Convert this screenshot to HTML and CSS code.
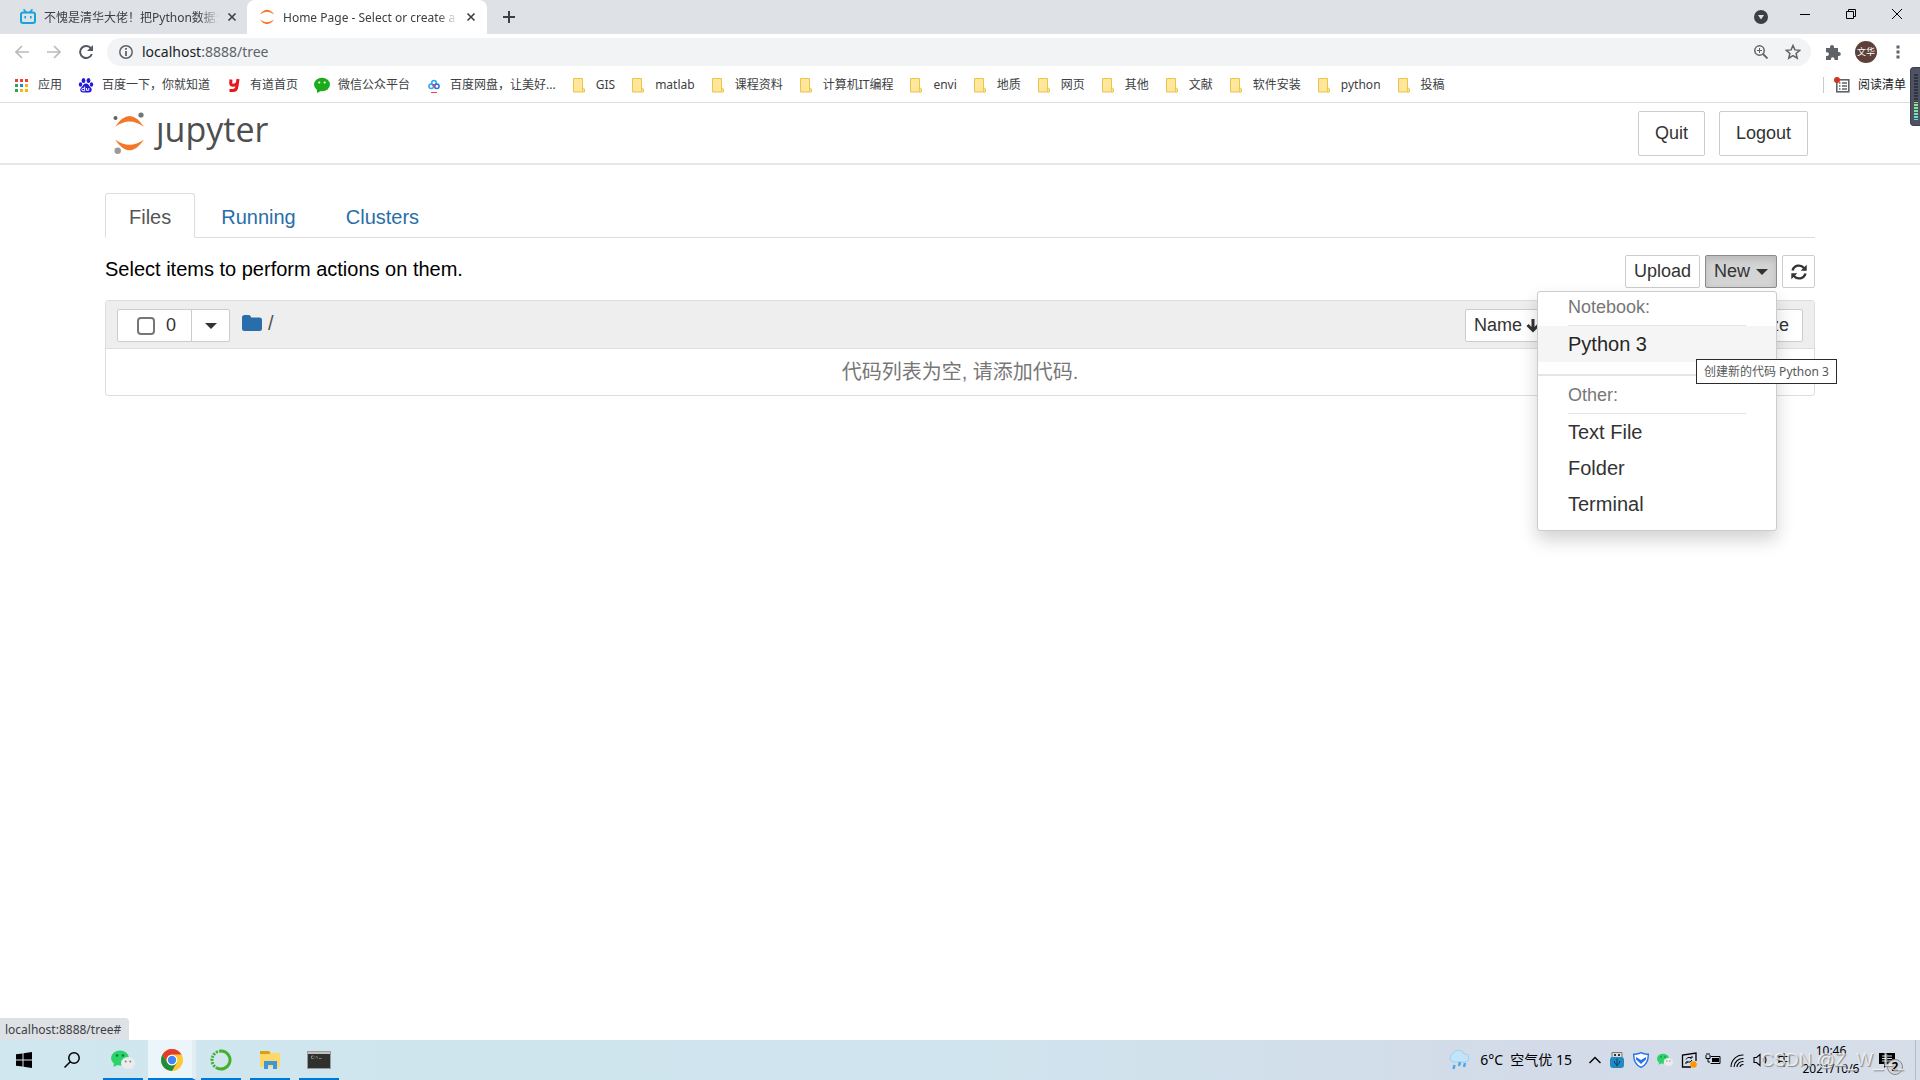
FILE: index.html
```html
<!DOCTYPE html>
<html lang="zh-CN">
<head>
<meta charset="utf-8">
<title>Home Page - Select or create a notebook</title>
<link rel="stylesheet" href="styles.css">
</head>
<body>
<svg class="defs" aria-hidden="true">
  <symbol id="i-close" viewBox="0 0 10 10"><path d="M1.5 1.5l7 7M8.5 1.5l-7 7" fill="none" stroke="#3c4043" stroke-width="1.6"/></symbol>
  <symbol id="i-folder" viewBox="0 0 16 16"><path d="M1.5 1.5h9v9l2 1.500v3h-11z" fill="#ffe69b" stroke="#e9c54b"/><path d="M10.500 10.500v4" stroke="#e9c54b"/></symbol>
  <symbol id="i-ring" viewBox="0 0 16 16"><path d="M.8 5.500Q8-3.800 15.200 5.500 8 .2 .8 5.500zM.8 10.500Q8 19.800 15.200 10.500 8 15.800 .8 10.500z" fill="#f37726"/></symbol>
  <symbol id="i-wechat" viewBox="0 0 24 20"><ellipse cx="9" cy="8" rx="9" ry="7.500" fill="#2bd36b"/><path d="M3 13l-.5 4 4-2z" fill="#2bd36b"/><circle cx="6" cy="5.500" r="1.200" fill="#14783c"/><circle cx="12" cy="5.500" r="1.200" fill="#14783c"/><ellipse cx="17" cy="13" rx="7" ry="6" fill="#ececec"/><path d="M20 17.500l2 2.300-.2-3.500z" fill="#ececec"/><circle cx="14.700" cy="11.500" r="1" fill="#888"/><circle cx="19.300" cy="11.500" r="1" fill="#888"/></symbol>
</svg>

<header class="browser">
  <div class="tabstrip">
    <div class="tab">
      <svg class="ico16" viewBox="0 0 16 16"><path d="M4 .8l2 2.500M12 .8l-2 2.500" stroke="#13a4dd" stroke-width="1.600" stroke-linecap="round"/><rect x="1" y="3.500" width="14" height="10.500" rx="2" fill="none" stroke="#13a4dd" stroke-width="2"/><path d="M5.200 7v2.500M10.800 7v2.500" stroke="#13a4dd" stroke-width="1.600"/></svg>
      <span class="tab-title">不愧是清华大佬！把Python数据分析</span>
      <button class="plain" aria-label="Close tab"><svg class="ico10"><use href="#i-close"/></svg></button>
    </div>
    <div class="tab active">
      <svg class="ico16"><use href="#i-ring"/></svg>
      <span class="tab-title">Home Page - Select or create a notebook</span>
      <button class="plain" aria-label="Close tab"><svg class="ico10"><use href="#i-close"/></svg></button>
    </div>
    <button class="plain newtab" aria-label="New tab"><svg class="ico12" viewBox="0 0 12 12"><path d="M6 0v12M0 6h12" stroke="#3c4043" stroke-width="2"/></svg></button>
    <div class="window-controls">
      <button class="plain tab-search" aria-label="Search tabs"><svg class="ico14" viewBox="0 0 14 14"><circle cx="7" cy="7" r="7" fill="#3c4043"/><path d="M4 5h6L7 9.500z" fill="#dee1e6"/></svg></button>
      <button class="plain" aria-label="Minimize"><svg class="ico10" viewBox="0 0 10 10"><path d="M0 5.500h10" stroke="#000"/></svg></button>
      <button class="plain" aria-label="Restore"><svg class="ico10" viewBox="0 0 10 10"><path d="M.5 2.500h7v7h-7zM2.500 2.500v-2h7v7h-2" fill="none" stroke="#000"/></svg></button>
      <button class="plain" aria-label="Close"><svg class="ico10" viewBox="0 0 10 10"><path d="M0 0l10 10M10 0L0 10" stroke="#000"/></svg></button>
    </div>
  </div>

  <div class="toolbar">
    <div class="history">
      <button class="plain" aria-label="Back"><svg class="ico14" viewBox="0 0 14 14"><path d="M14 7H1M7 1L1 7l6 6" fill="none" stroke="#b9bbbe" stroke-width="1.700"/></svg></button>
      <button class="plain" aria-label="Forward"><svg class="ico14" viewBox="0 0 14 14"><path d="M0 7h13M7 1l6 6-6 6" fill="none" stroke="#b9bbbe" stroke-width="1.700"/></svg></button>
      <button class="plain" aria-label="Reload"><svg class="ico14" viewBox="0 0 14 14"><path d="M12 3.500A6 6 0 1 0 12.800 9" fill="none" stroke="#55595d" stroke-width="2"/><path d="M14 0v6H8z" fill="#55595d"/></svg></button>
    </div>
    <div class="omnibox">
      <svg class="ico14" viewBox="0 0 14 14"><circle cx="7" cy="7" r="6.200" fill="none" stroke="#5f6368" stroke-width="1.500"/><path d="M7 3v1.800M7 6v5" stroke="#5f6368" stroke-width="1.800"/></svg>
      <a class="url" href="#"><b>localhost</b>:8888/tree</a>
      <svg class="ico14" viewBox="0 0 14 14"><circle cx="5.500" cy="5.500" r="4.700" fill="none" stroke="#5f6368" stroke-width="1.500"/><path d="M9 9l4.500 4.500" stroke="#5f6368" stroke-width="1.800"/><path d="M5.500 3v5M3 5.500h5" stroke="#5f6368"/></svg>
      <svg class="ico16" viewBox="0 0 16 16"><path d="M8 1.500l1.900 4.400 4.800.4-3.600 3.200 1.100 4.700L8 11.700l-4.200 2.500 1.100-4.700L1.300 6.300l4.800-.4z" fill="none" stroke="#5f6368" stroke-width="1.500"/></svg>
    </div>
    <button class="plain" aria-label="Extensions"><svg class="ico16" viewBox="0 0 16 16"><path d="M1 4h4V3a2 2 0 0 1 4 0v1h4v4h.8a2 2 0 0 1 0 4H13v4H9.500v-1a1.800 1.800 0 0 0-3.600 0v1H1v-4h1a1.800 1.800 0 0 0 0-3.800H1z" fill="#5f6368"/></svg></button>
    <button class="avatar">文华</button>
    <button class="plain" aria-label="Menu"><svg class="ico14" viewBox="0 0 14 14"><path d="M5.500 .5h3v3h-3zM5.500 5.500h3v3h-3zM5.500 10.500h3v3h-3z" fill="#5f6368"/></svg></button>
  </div>

  <nav class="bookmarks">
    <a href="#"><svg class="ico16" viewBox="0 0 16 16"><path d="M1 2h3v3H1zM6 2h3v3H6zM11 2h3v3h-3z" fill="#ea4335"/><path d="M1 7h3v3H1zM1 12h3v3H1z" fill="#34a05a"/><path d="M6 7h3v3H6z" fill="#1a88f0"/><path d="M11 7h3v3h-3zM6 12h3v3H6zM11 12h3v3h-3z" fill="#fbb605"/></svg>应用</a>
    <a href="#"><svg class="ico16" viewBox="0 0 16 16"><g fill="#2319dc"><ellipse cx="5.500" cy="3.500" rx="1.900" ry="2.600"/><ellipse cx="10.500" cy="3.500" rx="1.900" ry="2.600"/><ellipse cx="2.500" cy="7.500" rx="1.700" ry="2.300"/><ellipse cx="13.500" cy="7.500" rx="1.700" ry="2.300"/><path d="M8 6.500c2.500 0 3 2.500 4.700 4 2 1.800.8 5-1.700 5-1.500 0-4.500-.2-6 0-2.500.2-3.700-3.200-1.700-5C5 9 5.500 6.500 8 6.500z"/></g><path d="M6.700 9.500v4.300H5a1.200 1.200 0 0 1 0-2.500h1.500M8.500 11v2.300h2.300V11" stroke="#fff" fill="none"/></svg>百度一下，你就知道</a>
    <a href="#"><svg class="ico16" viewBox="0 0 16 16"><path d="M5 2.500l-.3 3.500q0 2.300 2.300 2.300t3.800-2M12 2l-1 7q-.6 5-5 4.500H3.500" fill="none" stroke="#e6171e" stroke-width="3"/></svg>有道首页</a>
    <a href="#"><svg class="ico16" viewBox="0 0 16 16"><ellipse cx="8" cy="7.500" rx="8" ry="6.700" fill="#1aad19"/><path d="M3 12v4l4-2z" fill="#1aad19"/><circle cx="5.300" cy="5.500" r="1.100" fill="#fff"/><circle cx="10.700" cy="5.500" r="1.100" fill="#fff"/></svg>微信公众平台</a>
    <a href="#"><svg class="ico16" viewBox="0 0 16 16"><g fill="none" stroke-width="1.500"><circle cx="8" cy="5.700" r="2.300" stroke="#2aa8f2"/><circle cx="5.200" cy="9.200" r="2.300" stroke="#2aa8f2"/><circle cx="10.800" cy="9.200" r="2.300" stroke="#2a6cf2"/><path d="M6.500 7.500l3 3" stroke="#ee3f4d"/></g><path d="M5 15.500h6" stroke="#ee3f4d"/></svg>百度网盘，让美好...</a>
    <a href="#"><svg class="ico16"><use href="#i-folder"/></svg>GIS</a>
    <a href="#"><svg class="ico16"><use href="#i-folder"/></svg>matlab</a>
    <a href="#"><svg class="ico16"><use href="#i-folder"/></svg>课程资料</a>
    <a href="#"><svg class="ico16"><use href="#i-folder"/></svg>计算机IT编程</a>
    <a href="#"><svg class="ico16"><use href="#i-folder"/></svg>envi</a>
    <a href="#"><svg class="ico16"><use href="#i-folder"/></svg>地质</a>
    <a href="#"><svg class="ico16"><use href="#i-folder"/></svg>网页</a>
    <a href="#"><svg class="ico16"><use href="#i-folder"/></svg>其他</a>
    <a href="#"><svg class="ico16"><use href="#i-folder"/></svg>文献</a>
    <a href="#"><svg class="ico16"><use href="#i-folder"/></svg>软件安装</a>
    <a href="#"><svg class="ico16"><use href="#i-folder"/></svg>python</a>
    <a href="#"><svg class="ico16"><use href="#i-folder"/></svg>投稿</a>
    <a class="reading" href="#"><svg class="ico16" viewBox="0 0 16 16"><rect x="2.800" y="2.800" width="12" height="12" fill="none" stroke="#5f6368" stroke-width="1.600"/><path d="M5 6h1.500M8 6h5M5 9h1.500M8 9h5M5 12h1.500M8 12h5" stroke="#5f6368" stroke-width="1.400"/><circle cx="3" cy="3" r="3" fill="#d93025"/></svg>阅读清单</a>
  </nav>
</header>

<div class="page">
  <div class="masthead">
    <a class="logo" href="#" aria-label="jupyter">
      <svg class="planet" viewBox="0 0 34 42"><path d="M2 15Q16.500-7 31 15 16.500 4 2 15zM2 27.500Q16.500 49 31 27.500 16.500 38 2 27.500z" fill="#f37726"/><circle cx="2.500" cy="6" r="2" fill="#616161"/><circle cx="28" cy="3" r="2.600" fill="#757575"/><circle cx="4.700" cy="38.700" r="3.200" fill="#9a9a9a"/></svg>
      <span>ȷupyter</span>
    </a>
    <div class="session">
      <button class="btn big">Quit</button>
      <button class="btn big">Logout</button>
    </div>
  </div>

  <main class="container">
    <nav class="nav-tabs">
      <a class="current" href="#">Files</a>
      <a href="#">Running</a>
      <a href="#">Clusters</a>
    </nav>

    <div class="actions">
      <p>Select items to perform actions on them.</p>
      <button class="btn">Upload</button>
      <div class="dropdown">
        <button class="btn pressed" aria-expanded="true">New <span class="caret"></span></button>
        <div class="menu">
          <div class="menu-head">Notebook:</div>
          <a class="hover" href="#">Python 3</a>
          <div class="menu-rule"></div>
          <div class="menu-head">Other:</div>
          <a href="#">Text File</a>
          <a href="#">Folder</a>
          <a href="#">Terminal</a>
          <div class="tooltip" role="tooltip">创建新的代码 Python 3</div>
        </div>
      </div>
      <button class="btn refresh" aria-label="Refresh"><svg class="ico16" viewBox="0 0 16 16"><path d="M1.500 6.500a6.600 6.600 0 0 1 11.500-2.500M14.500 9.500a6.600 6.600 0 0 1-11.500 2.500" fill="none" stroke="#333" stroke-width="2.300"/><path d="M15.700 .8v6H9.700zM.3 15.200v-6h6z" fill="#333"/></svg></button>
    </div>

    <section class="list">
      <div class="list-head">
        <div class="selector">
          <label><input type="checkbox"> 0</label>
          <button aria-label="Select type"><span class="caret"></span></button>
        </div>
        <a class="crumb" href="#" aria-label="Home"><svg viewBox="0 0 20 16"><path d="M0 2.500Q0 0 2.500 0h4Q9 0 9 2.500h8.500Q20 2.500 20 5v8.500q0 2.500-2.500 2.500h-15Q0 16 0 13.500z" fill="#296eaa"/></svg></a>
        <span class="slash">/</span>
        <div class="sorters">
          <button class="btn">Name <svg class="ico14" viewBox="0 0 14 14"><path d="M7 0v11M1.500 6L7 11.500 12.500 6" fill="none" stroke="#333" stroke-width="3"/></svg></button>
          <button class="btn">Last Modified</button>
          <button class="btn">File size</button>
        </div>
      </div>
      <p class="empty">代码列表为空, 请添加代码.</p>
    </section>
  </main>
  <div class="status">localhost:8888/tree#</div>
</div>

<footer class="taskbar">
  <button class="app" aria-label="Start"><svg class="ico16" viewBox="0 0 16 16"><path d="M0 2.300l6.500-.9v6H0zM7.500 1.200L16 0v7.400H7.500zM0 8.500h6.500v6L0 13.700zM7.500 8.500H16V16l-8.500-1.200z"/></svg></button>
  <button class="app" aria-label="Search"><svg class="ico16" viewBox="0 0 16 16"><circle cx="10" cy="6" r="5.200" fill="none" stroke="#000" stroke-width="1.500"/><path d="M6.300 9.700L.5 15.500" stroke="#000" stroke-width="1.500"/></svg></button>
  <button class="app open" aria-label="WeChat"><svg class="ico24"><use href="#i-wechat"/></svg></button>
  <button class="app open front" aria-label="Chrome"><svg class="ico22" viewBox="0 0 22 22"><circle cx="11" cy="11" r="11" fill="#fcc934"/><path d="M1.500 5.500A11 11 0 0 1 20.500 5.500H11A5.500 5.500 0 0 0 6.200 13.700z" fill="#e33b2e"/><path d="M1.500 5.500A11 11 0 0 0 11 22l4.800-8.200A5.500 5.500 0 0 1 6.200 13.700z" fill="#1e8e3e"/><circle cx="11" cy="11" r="5.300" fill="#fff"/><circle cx="11" cy="11" r="4.200" fill="#4285f4"/></svg></button>
  <button class="app open" aria-label="Anaconda"><svg class="ico22" viewBox="0 0 22 22"><path d="M11 2a9 9 0 1 1-5 16.500" fill="none" stroke="#43b02a" stroke-width="3"/><path d="M11 2a9 9 0 0 0-5 16.500" fill="none" stroke="#43b02a" stroke-width="3" stroke-dasharray="2 1.200"/></svg></button>
  <button class="app open" aria-label="Explorer"><svg class="ico22" viewBox="0 0 22 22"><path d="M1 2h9l2 2h9v14H1z" fill="#ffd767"/><path d="M1 2h9l1.500 2L10 5H1z" fill="#dc9e14"/><path d="M5 20v-8h13v8h-4v-4H9v4z" fill="#3a96dd"/></svg></button>
  <button class="app open" aria-label="Terminal"><svg class="ico24" viewBox="0 0 24 20"><rect x=".5" y="1.500" width="23" height="17" fill="#30302f" stroke="#9a9a9a"/><path d="M1 2h22v2H1z" fill="#c0c0c0"/><path d="M6.500 6H4.500v2.500h2M8 6v.7M8 7.800v.7M9.500 6l1.200 2.500M12 8.500h2.500" fill="none" stroke="#999" stroke-width=".8"/></svg></button>

  <div class="tray">
    <svg class="ico22" viewBox="0 0 22 22"><path d="M5 13a4.500 4.500 0 0 1 0-8.500A6 6 0 0 1 16 5a4 4 0 0 1 1 8z" fill="#c3e4f8" stroke="#9ccfee"/><path d="M6.500 16l-1 4M12 13l-1 4M17 14l-1 4" stroke="#4ba8ea" stroke-width="2.500"/></svg>
    <span class="weather">6°C&nbsp; 空气优 15</span>
    <svg class="ico12" viewBox="0 0 12 12"><path d="M.5 9L6 3.500 11.500 9" fill="none" stroke="#000" stroke-width="1.400"/></svg>
    <svg class="ico16" viewBox="0 0 16 16"><path d="M3 .5h10v6H3z" fill="#ddd" stroke="#777"/><path d="M5 2h2v2H5zM9 2h2v2H9z" fill="#333"/><rect x="1" y="5" width="14" height="11" rx="3" fill="#2189c4"/><path d="M8 6.500v8M5.500 9v2L8 13l2.500-2V9" fill="none" stroke="#0b3f60"/></svg>
    <svg class="ico16" viewBox="0 0 16 16"><path d="M8 .7Q11 2.500 15.300 2.200 15.500 12 8 15.400.5 12 .7 2.200 5 2.500 8 .7z" fill="#fff" stroke="#2a73e8" stroke-width="1.400"/><path d="M3 5l5 3 5-3v2.500L8 12 3 7.500z" fill="#2a73e8"/></svg>
    <svg class="ico16"><use href="#i-wechat"/></svg>
    <svg class="ico16" viewBox="0 0 16 16"><path d="M10 15H1.500V3L15 1v8" fill="none" stroke="#000" stroke-width="1.300"/><path d="M5 7.500q1-3 5-2M11 4v2H9M11 8q-1 3-5 2M5 12v-2h2" fill="none" stroke="#000"/><circle cx="12.500" cy="12.500" r="3.300" fill="#ff9800"/></svg>
    <svg class="ico16" viewBox="0 0 16 16"><path d="M7 6h7v4H7z"/><path d="M5.500 4.500h9.500v7H5.500M1 3v3.500h4V3M2 1v2M4 1v2M3 7v3h2" fill="none" stroke="#000"/></svg>
    <svg class="ico16" viewBox="0 0 16 16"><path d="M2 15A12 12 0 0 1 14.500 3M5 15a9 9 0 0 1 9.500-8.500M8 15a6 6 0 0 1 6.500-5.500M11 15a3 3 0 0 1 3.500-2.500" fill="none" stroke="#000" stroke-width="1.100"/></svg>
    <svg class="ico16" viewBox="0 0 16 16"><path d="M1 5.500h2.500L7 2.500v11l-3.500-3H1zM9.500 6q1.500 2 0 4M11.500 4q3 4 0 8" fill="none" stroke="#000" stroke-width="1.100"/></svg>
    <span class="ime">中</span>
    <div class="clock"><span>10:46</span><span>2021/10/6</span></div>
    <div class="notices">
      <svg class="ico16" viewBox="0 0 16 16"><path d="M0 1h16v11H9l-4 4v-4H0z"/><path d="M3 4h10M3 6.500h10M3 9h10" stroke="#d3dce8"/></svg>
      <span class="count">2</span>
    </div>
  </div>
</footer>

<div class="watermark">CSDN @Z_W_L_</div>
<div class="meter"></div>
</body>
</html>
```
FILE: styles.css
```css
* { box-sizing: border-box; }

body {
  margin: 0;
  min-height: 100vh;
  display: flex;
  flex-direction: column;
  position: relative;
  background: #fff;
  color: #000;
  font-family: "Liberation Sans", "Noto Sans CJK SC", sans-serif;
  font-size: 20px;
}

a { color: inherit; text-decoration: none; }
p { margin: 0; }
button { font: inherit; color: inherit; cursor: pointer; }
svg { flex: none; display: block; }

.defs { position: absolute; width: 0; height: 0; }
.ico10 { width: 10px; height: 10px; }
.ico12 { width: 12px; height: 12px; }
.ico14 { width: 14px; height: 14px; }
.ico16 { width: 16px; height: 16px; }
.ico22 { width: 22px; height: 22px; }
.ico24 { width: 24px; height: 20px; }

.plain {
  display: flex;
  padding: 0;
  border: 0;
  background: none;
}

/* Browser chrome */
.browser, .status, .taskbar, .tooltip {
  font-family: "Noto Sans", "Noto Sans CJK SC", sans-serif;
  font-size: 12px;
  line-height: 16px;
  color: #3c4043;
}

.tabstrip {
  display: flex;
  align-items: center;
  height: 34px;
  background: #dee1e6;
}

.tab {
  display: flex;
  align-items: center;
  gap: 8px;
  width: 240px;
  height: 34px;
  padding: 0 11px 0 12px;
}
.tab:first-child { width: 247px; padding: 0 10px 0 20px; }

.tab.active {
  background: #fff;
  border-radius: 8px 8px 0 0;
}

.tab-title {
  flex: 1;
  overflow: hidden;
  padding-top: 1px;
  white-space: nowrap;
  mask-image: linear-gradient(to left, transparent, #000 20px);
}

.newtab { margin-left: 16px; }

.window-controls {
  display: flex;
  align-items: center;
  gap: 36px;
  height: 28px;
  margin: 0 18px 6px auto;
}
.window-controls .tab-search { margin: 6px -4px 0 0; }

.toolbar {
  display: flex;
  align-items: center;
  gap: 14px;
  height: 36px;
  padding: 0 15px;
}
.history { display: flex; gap: 18px; }

.omnibox {
  flex: 1;
  display: flex;
  align-items: center;
  gap: 17px;
  height: 28px;
  padding: 0 10px 0 12px;
  border-radius: 14px;
  background: #f1f3f4;
}

.url {
  flex: 1;
  margin-left: -8px;
  font-size: 14px;
  color: #5f6368;
}
.url b { font-weight: 400; color: #202124; }

.avatar {
  width: 22px;
  height: 22px;
  padding: 0;
  border: 0;
  border-radius: 50%;
  background: #5d4037;
  color: #fff;
  font-size: 9px;
  line-height: 22px;
  white-space: nowrap;
}

.bookmarks {
  display: flex;
  align-items: center;
  gap: 16px;
  height: 33px;
  padding: 0 14px 2px;
  border-bottom: 1px solid #dadce0;
  white-space: nowrap;
}
.bookmarks a { display: flex; align-items: center; gap: 8px; }
.bookmarks .reading {
  margin-left: auto;
  padding-left: 10px;
  border-left: 1px solid #c8cacd;
  color: #202124;
}

/* Notebook dashboard */
.page {
  flex: 1;
  position: relative;
}

.masthead {
  display: flex;
  align-items: center;
  justify-content: space-between;
  height: 62px;
  padding: 0 112px 0 113px;
  border-bottom: 2px solid #e7e7e7;
}

.logo {
  display: flex;
  align-items: center;
  gap: 9px;
  color: #4e4e4e;
  font-family: "Open Sans", sans-serif;
  font-size: 34px;
  line-height: 40px;
}
.logo span { padding-bottom: 8px; }
.planet { width: 34px; height: 42px; }

.session { display: flex; gap: 14px; }

.btn {
  display: flex;
  align-items: center;
  gap: 4px;
  height: 33px;
  padding: 0 8px;
  border: 1px solid #ccc;
  border-radius: 2px;
  background: #fff;
  color: #333;
  font-size: 18px;
  line-height: 27px;
  white-space: nowrap;
}
.btn.big { height: 45px; padding: 0 16px; }
.btn.pressed {
  gap: 6px;
  background: #d4d4d4;
  border-color: #8c8c8c;
  box-shadow: inset 0 4px 7px rgba(0, 0, 0, .125);
}

.caret {
  border: 6px solid transparent;
  border-top-color: #333;
  border-bottom: 0;
}

.container { padding: 28px 105px 0; }

.nav-tabs {
  display: flex;
  gap: 2px;
  height: 45px;
  border-bottom: 1px solid #ddd;
  color: #296eaa;
}
.nav-tabs a {
  height: 45px;
  padding: 0 23px;
  border: 1px solid transparent;
  line-height: 46px;
}
.nav-tabs .current {
  border-color: #ddd #ddd #fff;
  border-radius: 3px 3px 0 0;
  color: #555;
}

.actions {
  display: flex;
  gap: 5px;
  padding: 17px 0 12px;
}
.actions p { flex: 1; line-height: 28px; }

.dropdown { position: relative; }
.refresh { padding: 0; width: 33px; justify-content: center; }

.menu {
  position: absolute;
  top: 36px;
  right: 0;
  z-index: 2;
  width: 240px;
  padding-bottom: 8px;
  border: 1px solid #ccc;
  border-radius: 3px;
  background: #fff;
  box-shadow: 0 9px 18px rgba(0, 0, 0, .175);
}
.menu a {
  display: block;
  padding: 0 30px;
  color: #333;
  line-height: 36px;
}
.menu .hover { background: #f5f5f5; color: #262626; }
.menu-head {
  height: 34px;
  margin: 0 30px;
  border-bottom: 1px solid #e5e5e5;
  color: #777;
  font-size: 18px;
  line-height: 31px;
}
.menu-rule { height: 2px; margin: 12px 0 4px; background: #e5e5e5; }

.tooltip {
  position: absolute;
  top: 67px;
  left: 158px;
  padding: 4px 7px 3px;
  border: 1px solid #2b2b2b;
  background: #fff;
  color: #575757;
  white-space: nowrap;
}

.list {
  border: 1px solid #ddd;
  border-radius: 3px;
}
.list-head {
  display: flex;
  align-items: center;
  height: 48px;
  padding: 8px 11px 6px;
  border-bottom: 1px solid #ddd;
  background: #eee;
}

.selector {
  display: flex;
  height: 33px;
  border: 1px solid #ccc;
  border-radius: 2px;
  background: #fff;
  color: #333;
  font-size: 18px;
}
.selector label {
  display: flex;
  align-items: center;
  gap: 11px;
  padding: 0 15px 0 19px;
}
.selector input {
  appearance: none;
  width: 18px;
  height: 18px;
  margin: 0;
  border: 2px solid #767676;
  border-radius: 4px;
}
.selector button {
  display: flex;
  align-items: center;
  width: 38px;
  justify-content: center;
  padding: 0;
  border: 0;
  border-left: 1px solid #ccc;
  background: none;
}
.crumb { margin: 0 6px 6px 12px; }
.crumb svg { width: 20px; height: 16px; }
.slash { padding-bottom: 4px; color: #555; }
.sorters { display: flex; margin-left: auto; gap: 20px; }
.sorters .btn:last-child { padding-right: 13px; }

.empty {
  color: #777;
  line-height: 46px;
  text-align: center;
}

.status {
  position: absolute;
  left: 0;
  bottom: 0;
  padding: 4px 8px 2px 5px;
  border-radius: 0 4px 0 0;
  background: #dee1e6;
}

/* Taskbar */
.taskbar {
  display: flex;
  height: 40px;
  background: linear-gradient(to right, #d0e7ef, #cfe4ee 50%, #d3dbe8 80%, #d6deea);
  color: #000;
}
.app {
  display: flex;
  align-items: center;
  justify-content: center;
  width: 40px;
  margin-right: 9px;
  padding: 2px 0 0;
  border: 0;
  border-bottom: 2px solid transparent;
  background: none;
}
.app:first-child { margin: 0 0 0 4px; }
.app:nth-child(2) { margin: 0 11px 0 8px; }
.app.open { border-bottom-color: #0078d7; }
.app:nth-child(3) { margin-right: 5px; }
.app.front {
  width: 48px;
  margin-right: 5px;
  padding-left: 4px;
  border-right: 4px solid #e0eef4;
  background: #ecf5f9;
}

.tray {
  display: flex;
  align-items: center;
  gap: 8px;
  margin: 0 4px 0 auto;
  padding-right: 12px;
  border-right: 1px solid #b4bcc8;
}
.weather { margin: 0 9px 0 2px; font-size: 14px; white-space: nowrap; }
.ime { font-size: 14px; }
.clock {
  display: flex;
  flex-direction: column;
  align-items: center;
  width: 64px;
  line-height: 18px;
}
.notices { position: relative; margin: 0 8px; }
.count {
  position: absolute;
  left: 8px;
  top: 7px;
  width: 16px;
  height: 16px;
  border: 1px solid #888;
  border-radius: 50%;
  background: #d3d6da;
  font-weight: 700;
  line-height: 14px;
  text-align: center;
}

.watermark {
  position: absolute;
  right: 17px;
  bottom: 7px;
  color: rgba(255, 255, 255, .7);
  font-size: 18px;
  line-height: 26px;
  text-shadow: 1px 1px 1px #888;
}

.meter {
  position: absolute;
  top: 67px;
  right: 0;
  width: 10px;
  height: 59px;
  border: 1px solid #3a3f50;
  border-right: 0;
  border-radius: 4px 0 0 4px;
  background:
    repeating-linear-gradient(transparent 0 2px, #4e5364 2px 3px) 3px 6px / 4px 46px no-repeat,
    linear-gradient(#30343f 0 28px, #a3e27a 28px, #5ee0c8) 3px 6px / 4px 46px no-repeat,
    #4e5364;
}
```
